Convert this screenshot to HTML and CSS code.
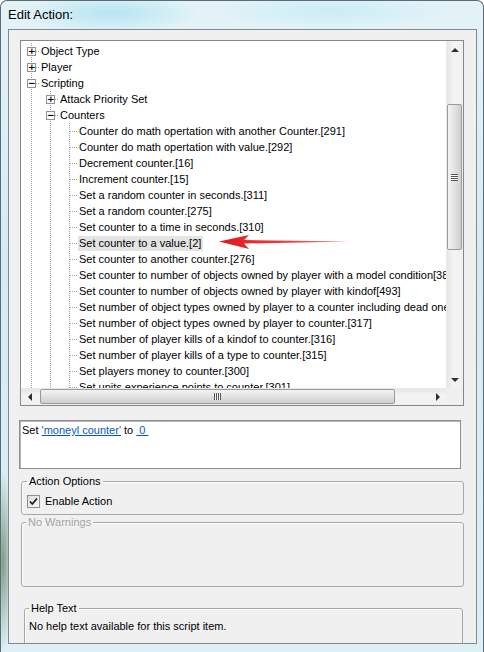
FILE: index.html
```html
<!DOCTYPE html>
<html>
<head>
<meta charset="utf-8">
<link rel="stylesheet" href="styles.css">
</head>
<body>
<div class="window">
  <div class="titlebar">Edit Action:</div>
  <div class="client">
    <div class="tree">
      <div class="tree-body">
        <div class="row"><span class="cell t"><span class="exp">+</span></span><span class="lbl">Object Type</span></div>
        <div class="row"><span class="cell t"><span class="exp">+</span></span><span class="lbl">Player</span></div>
        <div class="row"><span class="cell t"><span class="exp">−</span></span><span class="lbl">Scripting</span></div>
        <div class="row"><span class="cell v"></span><span class="cell t"><span class="exp">+</span></span><span class="lbl">Attack Priority Set</span></div>
        <div class="row"><span class="cell v"></span><span class="cell t"><span class="exp">−</span></span><span class="lbl">Counters</span></div>
        <div class="row"><span class="cell v"></span><span class="cell v"></span><span class="cell t"></span><span class="lbl">Counter do math opertation with another Counter.[291]</span></div>
        <div class="row"><span class="cell v"></span><span class="cell v"></span><span class="cell t"></span><span class="lbl">Counter do math opertation with value.[292]</span></div>
        <div class="row"><span class="cell v"></span><span class="cell v"></span><span class="cell t"></span><span class="lbl">Decrement counter.[16]</span></div>
        <div class="row"><span class="cell v"></span><span class="cell v"></span><span class="cell t"></span><span class="lbl">Increment counter.[15]</span></div>
        <div class="row"><span class="cell v"></span><span class="cell v"></span><span class="cell t"></span><span class="lbl">Set a random counter in seconds.[311]</span></div>
        <div class="row"><span class="cell v"></span><span class="cell v"></span><span class="cell t"></span><span class="lbl">Set a random counter.[275]</span></div>
        <div class="row"><span class="cell v"></span><span class="cell v"></span><span class="cell t"></span><span class="lbl">Set counter to a time in seconds.[310]</span></div>
        <div class="row"><span class="cell v"></span><span class="cell v"></span><span class="cell t"></span><span class="lbl selected">Set counter to a value.[2]</span></div>
        <div class="row"><span class="cell v"></span><span class="cell v"></span><span class="cell t"></span><span class="lbl">Set counter to another counter.[276]</span></div>
        <div class="row"><span class="cell v"></span><span class="cell v"></span><span class="cell t"></span><span class="lbl">Set counter to number of objects owned by player with a model condition[384]</span></div>
        <div class="row"><span class="cell v"></span><span class="cell v"></span><span class="cell t"></span><span class="lbl">Set counter to number of objects owned by player with kindof[493]</span></div>
        <div class="row"><span class="cell v"></span><span class="cell v"></span><span class="cell t"></span><span class="lbl">Set number of object types owned by player to a counter including dead ones.[318]</span></div>
        <div class="row"><span class="cell v"></span><span class="cell v"></span><span class="cell t"></span><span class="lbl">Set number of object types owned by player to counter.[317]</span></div>
        <div class="row"><span class="cell v"></span><span class="cell v"></span><span class="cell t"></span><span class="lbl">Set number of player kills of a kindof to counter.[316]</span></div>
        <div class="row"><span class="cell v"></span><span class="cell v"></span><span class="cell t"></span><span class="lbl">Set number of player kills of a type to counter.[315]</span></div>
        <div class="row"><span class="cell v"></span><span class="cell v"></span><span class="cell t"></span><span class="lbl">Set players money to counter.[300]</span></div>
        <div class="row"><span class="cell v"></span><span class="cell v"></span><span class="cell t"></span><span class="lbl">Set units experience points to counter.[301]</span></div>
        <svg class="arrow" width="132" height="16" viewBox="0 0 132 16">
          <defs>
            <linearGradient id="ag" x1="0" y1="0" x2="1" y2="0">
              <stop offset="0" stop-color="#e0181c"/>
              <stop offset="0.6" stop-color="#f04448"/>
              <stop offset="1" stop-color="#f87074"/>
            </linearGradient>
          </defs>
          <polygon points="0,7.5 30,1 25,6 130,7.6 25,9.6 30,15" fill="url(#ag)"/>
        </svg>
      </div>
      <div class="vscroll">
        <span class="sbtn"><span class="tri up"></span></span>
        <span class="vgap"></span>
        <span class="vthumb"><span class="grip-h"></span></span>
        <span class="fill"></span>
        <span class="sbtn"><span class="tri down"></span></span>
      </div>
      <div class="hscroll">
        <span class="sbtn"><span class="tri left"></span></span>
        <span class="hgap"></span>
        <span class="hthumb"><span class="grip-v"></span></span>
        <span class="fill"></span>
        <span class="sbtn"><span class="tri right"></span></span>
      </div>
      <div class="corner"></div>
    </div>

    <div class="statement">Set <a class="link">'moneyl counter'</a> to <a class="link">&nbsp;0&nbsp;</a></div>

    <fieldset class="group options">
      <legend>Action Options</legend>
      <label class="check"><span class="cbox"><svg width="9" height="9" viewBox="0 0 9 9"><path d="M1 4.5 L3.3 7 L8 1.5" fill="none" stroke="#1f1f1f" stroke-width="1.8"/></svg></span>Enable Action</label>
    </fieldset>

    <fieldset class="group warnings">
      <legend>No Warnings</legend>
    </fieldset>

    <fieldset class="group help">
      <legend>Help Text</legend>
      <p class="helptext">No help text available for this script item.</p>
    </fieldset>
  </div>
</div>
</body>
</html>
```

FILE: styles.css
```css
html, body {
  margin: 0;
  padding: 0;
}
body {
  width: 484px;
  height: 652px;
  overflow: hidden;
  font-family: "Liberation Sans", Arial, sans-serif;
}
.window {
  box-sizing: border-box;
  width: 484px;
  height: 652px;
  padding: 0 6px 8px 7px;
  display: flex;
  flex-direction: column;
  border-radius: 7px 7px 0 0;
  border: 1px solid #5d6b74;
  border-bottom: none;
  background:
    radial-gradient(ellipse 90px 20px at 110px 12px, rgba(170, 225, 240, 0.8), transparent),
    radial-gradient(ellipse 120px 18px at 330px 10px, rgba(190, 235, 245, 0.7), transparent),
    radial-gradient(ellipse 10px 90px at 2px 560px, rgba(70, 100, 60, 0.6), transparent),
    linear-gradient(180deg, #e4f3f8 0%, #d3ecf4 40%, #dcf0f6 100%);
}
.titlebar {
  height: 28px;
  line-height: 28px;
  padding-left: 0;
  font-size: 13px;
  color: #000;
  flex: none;
}
.client {
  flex: 1;
  background: #f0f0f0;
  border: 1px solid #7c8b94;
  display: flex;
  flex-direction: column;
  overflow: hidden;
  min-height: 0;
}

/* Tree view */
.tree {
  flex: none;
  margin: 10px 12px 0 11px;
  height: 366px;
  box-sizing: border-box;
  border: 1px solid #828790;
  background: #fff;
  display: grid;
  grid-template-columns: 1fr 17px;
  grid-template-rows: 1fr 17px;
  overflow: hidden;
}
.tree-body {
  position: relative;
  overflow: hidden;
  padding-top: 2px;
  font-size: 11px;
  color: #000;
}
.row {
  display: flex;
  height: 16px;
  align-items: center;
  white-space: nowrap;
}
.cell {
  flex: none;
  width: 19px;
  height: 16px;
  display: flex;
  align-items: flex-start;
}
.cell.v {
  background: repeating-linear-gradient(to bottom, #a0a0a0 0 1px, transparent 1px 2px) 10px 0 / 1px 100% no-repeat;
}
.cell.t {
  background:
    repeating-linear-gradient(to bottom, #a0a0a0 0 1px, transparent 1px 2px) 10px 0 / 1px 100% no-repeat,
    repeating-linear-gradient(to right, #a0a0a0 0 1px, transparent 1px 2px) 11px 8px / 8px 1px no-repeat;
}
.exp {
  box-sizing: border-box;
  width: 9px;
  height: 9px;
  margin: 4px 0 0 6px;
  border: 1px solid #919191;
  background: #fff;
  font-size: 9px;
  line-height: 6px;
  text-align: center;
  color: #000;
  font-family: "DejaVu Sans", sans-serif;
  font-weight: bold;
  overflow: hidden;
}
.lbl {
  padding: 1px 2px 1px 1px;
  line-height: 13px;
}
.lbl.selected {
  background: #e4e4e4;
}
.arrow {
  position: absolute;
  left: 198px;
  top: 193px;
}

/* scrollbars */
.vscroll {
  display: flex;
  flex-direction: column;
  background: linear-gradient(to right, #e6e6e6, #f4f4f4 40%, #f0f0f0);
  border-left: 1px solid #e9e9e9;
}
.hscroll {
  display: flex;
  flex-direction: row;
  background: linear-gradient(to bottom, #e6e6e6, #f4f4f4 40%, #f0f0f0);
  border-top: 1px solid #e9e9e9;
}
.corner {
  background: #f0f0f0;
}
.sbtn {
  flex: none;
  width: 17px;
  height: 17px;
  display: flex;
  align-items: center;
  justify-content: center;
}
.hscroll .sbtn {
  height: 16px;
}
.vscroll .sbtn {
  width: 16px;
}
.tri {
  width: 0;
  height: 0;
}
.tri.up {
  border-left: 4px solid transparent;
  border-right: 4px solid transparent;
  border-bottom: 4px solid #303030;
}
.tri.down {
  border-left: 4px solid transparent;
  border-right: 4px solid transparent;
  border-top: 4px solid #303030;
}
.tri.left {
  border-top: 4px solid transparent;
  border-bottom: 4px solid transparent;
  border-right: 4px solid #303030;
}
.tri.right {
  border-top: 4px solid transparent;
  border-bottom: 4px solid transparent;
  border-left: 4px solid #303030;
}
.vgap {
  flex: none;
  height: 46px;
}
.hgap {
  flex: none;
  width: 2px;
}
.fill {
  flex: 1;
}
.vthumb {
  flex: none;
  height: 146px;
  margin: 0 1px 0 0;
  box-sizing: border-box;
  border: 1px solid #9a9a9a;
  border-radius: 2px;
  background: linear-gradient(to right, #f3f3f3, #e4e4e4 45%, #cfcfcf);
  display: flex;
  align-items: center;
  justify-content: center;
}
.hthumb {
  flex: none;
  width: 355px;
  margin: 0 0 1px 0;
  box-sizing: border-box;
  border: 1px solid #9a9a9a;
  border-radius: 2px;
  background: linear-gradient(to bottom, #f3f3f3, #e4e4e4 45%, #cfcfcf);
  display: flex;
  align-items: center;
  justify-content: center;
}
.grip-h {
  width: 7px;
  height: 7px;
  background: repeating-linear-gradient(to bottom, #555 0 1px, #f6f6f6 1px 2px);
}
.grip-v {
  width: 7px;
  height: 7px;
  background: repeating-linear-gradient(to right, #555 0 1px, #f6f6f6 1px 2px);
}

/* statement box */
.statement {
  flex: none;
  margin: 14px 15px 0 10px;
  height: 49px;
  box-sizing: border-box;
  border: 1px solid #8e8f8f;
  box-shadow: inset 1px 1px 0 #b5b5b5;
  background: #fff;
  font-size: 11px;
  line-height: 13px;
  padding: 3px 2px;
  color: #000;
}
.link {
  color: #0a56c8;
  text-decoration: underline;
}

/* group boxes */
.group {
  flex: none;
  margin: 0;
  padding: 0;
  border: 1px solid #a8a8a8;
  border-radius: 3px;
  box-shadow: inset 1px 1px 0 #fdfdfd;
  min-width: 0;
}
.group legend {
  font-size: 11px;
  line-height: 13px;
  padding: 0 2px;
  margin-left: 0;
  color: #000;
}
.options {
  margin: 6px 12px 0 12px;
  padding: 7px 6px 6px 5px;
}
.options legend {
  margin-left: 0;
}
.check {
  display: flex;
  align-items: center;
  gap: 5px;
  font-size: 11px;
  line-height: 13px;
  height: 13px;
}
.cbox {
  box-sizing: border-box;
  width: 13px;
  height: 13px;
  border: 1px solid #8f8f8f;
  background: linear-gradient(135deg, #dcdcdc, #fbfbfb);
  display: flex;
  align-items: center;
  justify-content: center;
}
.warnings {
  margin: 1px 12px 0 12px;
  padding: 0 4px;
  height: 71px;
  box-sizing: border-box;
}
.warnings legend {
  color: #a3a3a3;
}
.help {
  margin: 15px 13px 0 15px;
  padding: 5px 4px 30px 4px;
}
.help legend {
  margin-left: 0;
}
.helptext {
  margin: 0;
  font-size: 11px;
  line-height: 13px;
  color: #000;
}
```
